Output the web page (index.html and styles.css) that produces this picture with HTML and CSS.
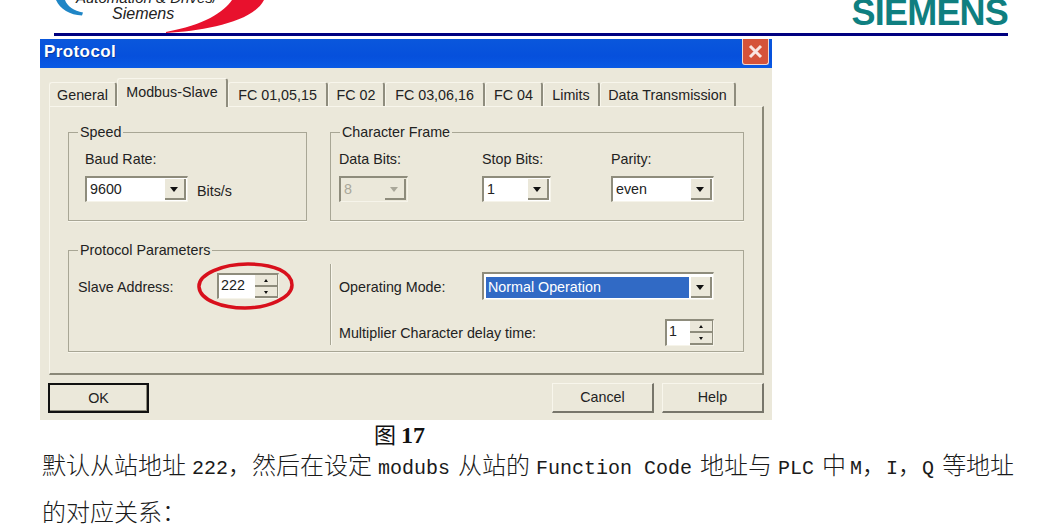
FILE: index.html
```html
<!DOCTYPE html>
<html lang="zh">
<head>
    <meta charset="UTF-8">
    <title>Protocol</title>
    <link rel="stylesheet" href="styles.css">
</head>
<body>
    <header class="page-head">
        <div class="logo">
            <svg class="logo-swoosh" width="211" height="33" viewBox="0 0 211 33">
                <path d="M2 0C6 9 16 15 28 15.500L29 12.500C20 11 13 6 11 0Z" fill="#1f86c6"/>
                <path d="M112 33C150 31 199 22 210 0L178 0C170 12 150 25 112 32Z" fill="#e8112d"/>
            </svg>
            <div class="logo-line">Automation &amp; Drives/</div>
            <div class="logo-line logo-name">Siemens</div>
        </div>
        <div class="brand">SIEMENS</div>
    </header>

    <div class="dialog">
        <div class="titlebar">
            <span class="title">Protocol</span>
            <span class="close">
                <svg width="17" height="17" viewBox="0 0 17 17"><path d="M3 3L14 14M14 3L3 14" stroke="#fff" stroke-width="3" stroke-opacity=".85"/></svg>
            </span>
        </div>
        <div class="dialog-body">
            <div class="tabs">
                <div class="tab">General</div>
                <div class="tab tab-active">Modbus-Slave</div>
                <div class="tab">FC 01,05,15</div>
                <div class="tab">FC 02</div>
                <div class="tab">FC 03,06,16</div>
                <div class="tab">FC 04</div>
                <div class="tab">Limits</div>
                <div class="tab">Data Transmission</div>
            </div>
            <div class="panel">
                <div class="group-row">
                    <fieldset class="group group-speed">
                        <legend>Speed</legend>
                        <div class="speed-body">
                            <div class="label">Baud Rate:</div>
                            <div class="inline">
                                <div class="combo combo-baud"><span class="value">9600</span><span class="drop"></span></div>
                                <span class="unit">Bits/s</span>
                            </div>
                        </div>
                    </fieldset>
                    <fieldset class="group group-frame">
                        <legend>Character Frame</legend>
                        <div class="frame-grid">
                            <div>
                                <div class="label">Data Bits:</div>
                                <div class="combo combo-small combo-off"><span class="value">8</span><span class="drop"></span></div>
                            </div>
                            <div>
                                <div class="label">Stop Bits:</div>
                                <div class="combo combo-small"><span class="value">1</span><span class="drop"></span></div>
                            </div>
                            <div>
                                <div class="label">Parity:</div>
                                <div class="combo combo-parity"><span class="value">even</span><span class="drop"></span></div>
                            </div>
                        </div>
                    </fieldset>
                </div>
                <fieldset class="group group-params">
                    <legend>Protocol Parameters</legend>
                    <div class="params">
                        <div class="params-left">
                            <span class="slave-label">Slave Address:</span>
                            <div class="spin spin-slave"><span class="value">222</span><span class="arrows"><i class="up"></i><i class="down"></i></span></div>
                            <svg class="circle" width="99" height="50" viewBox="0 0 99 50">
                                <path d="M3 26C2 13 27 3 52 3C78 3 96 11 96 24C96 37 72 47 49 47C26 47 4 39 3 26Z" fill="none" stroke="#d8101c" stroke-width="3.500"/>
                            </svg>
                        </div>
                        <div class="params-right">
                            <div class="mode-row">
                                <span class="mode-label">Operating Mode:</span>
                                <div class="combo combo-mode"><span class="value selected">Normal Operation</span><span class="drop"></span></div>
                            </div>
                            <div class="delay-row">
                                <span>Multiplier Character delay time:</span>
                                <div class="spin spin-delay"><span class="value">1</span><span class="arrows"><i class="up"></i><i class="down"></i></span></div>
                            </div>
                        </div>
                    </div>
                </fieldset>
            </div>
            <div class="footer">
                <div class="btn btn-default">OK</div>
                <div class="btn btn-cancel">Cancel</div>
                <div class="btn">Help</div>
            </div>
        </div>
    </div>

    <div class="caption">图 <b>17</b></div>
    <p class="doc-line doc-first"><span class="zh">默认从站地址</span><span class="lat lat-end">222</span><span class="zh">，然后在设定</span><span class="lat">modubs</span><span class="zh">从站的</span><span class="lat">Function Code</span><span class="zh">地址与</span><span class="lat">PLC</span><span class="zh">中</span><span class="lat lat-m">M</span><span class="zh">，</span><span>I</span><span class="zh">，</span><span class="lat-q">Q</span><span class="zh">等地址</span></p>
    <p class="doc-line"><span class="zh">的对应关系：</span></p>
</body>
</html>
```

FILE: styles.css
```css
/* Page */
body {
    margin: 0;
    background-color: #fff;
    font-family: "Liberation Sans", Arial, sans-serif;
    color: #222;
}

.page-head {
    display: flex;
    justify-content: space-between;
    height: 33px;
    margin: 0 51px 0 54px;
    border-bottom: 3px solid #000080;
    overflow: hidden;
}

.logo {
    position: relative;
    display: flex;
    flex-direction: column;
    justify-content: flex-end;
    width: 211px;
    height: 33px;
    padding-bottom: 11px;
    box-sizing: border-box;
}

.logo-swoosh {
    position: absolute;
    left: 0;
    top: 0;
}

.logo-line {
    position: relative;
    margin-left: 22px;
    font-size: 15px;
    font-style: italic;
    line-height: 16px;
    white-space: nowrap;
}

.logo-name {
    margin-left: 58px;
    font-size: 16px;
}

.brand {
    height: 33px;
    margin-top: -4px;
    font-size: 36px;
    font-weight: bold;
    line-height: 33px;
    letter-spacing: -0.8px;
    color: #0f7f80;
}

/* Dialog */
.dialog {
    width: 732px;
    margin: 3px 0 0 40px;
    background-color: #ebe8da;
}

.titlebar {
    display: flex;
    justify-content: space-between;
    align-items: flex-start;
    height: 29px;
    padding-right: 3px;
    background: linear-gradient(#0a57dc, #0650dc 60%, #0a5ae4);
}

.title {
    margin: 3px 0 0 4px;
    color: #fff;
    font-size: 17px;
    font-weight: bold;
    line-height: 20px;
    letter-spacing: 0.4px;
    text-shadow: 1px 1px 0 #0a3a9c;
}

.close {
    display: flex;
    align-items: center;
    justify-content: center;
    width: 25px;
    height: 25px;
    background-color: #d5533a;
    border: 1px solid #f0d8d0;
    border-top: 0;
    border-radius: 0 0 3px 3px;
}

.dialog-body {
    padding: 10px 8px 7px;
}

.tabs {
    display: grid;
    grid-template-columns: 68px 111px 100px 57px 100px 58px 57px 136px;
    align-items: end;
    height: 28px;
    margin-left: 1px;
    font-size: 14.300px;
}

.tab {
    position: relative;
    height: 24px;
    box-sizing: border-box;
    border-top: 1px solid #f8f6ec;
    border-left: 1px solid #f8f6ec;
    border-right: 2px solid #8f8d7e;
    border-radius: 3px 3px 0 0;
    line-height: 24px;
    text-align: center;
    white-space: nowrap;
}

.tab-active {
    height: 29px;
    margin-bottom: -1px;
    z-index: 1;
    background-color: #ebe8da;
    line-height: 26px;
}

.panel {
    height: 269px;
    margin-left: 1px;
    padding: 17px 0 0 18px;
    box-sizing: border-box;
    border-top: 1px solid #f8f6ec;
    border-left: 1px solid #f8f6ec;
    border-right: 2px solid #8a8878;
    border-bottom: 2px solid #8a8878;
    font-size: 14.300px;
}

.group-row {
    display: flex;
    gap: 23px;
}

.group {
    margin: 0;
    padding: 0;
    box-sizing: border-box;
    border: 1px solid #a8a695;
    box-shadow: 0 1px 0 #f8f6ec;
}

.group legend {
    margin-left: 9px;
    padding: 0 2px;
    line-height: 16px;
}

.group-speed {
    width: 239px;
    height: 97px;
    padding-top: 11px;
}

.speed-body {
    padding-left: 16px;
}

.group-frame {
    width: 414px;
    height: 97px;
    padding-top: 11px;
}

.frame-grid {
    display: grid;
    grid-template-columns: 143px 129px auto;
    padding-left: 8px;
}

.label {
    height: 16px;
    margin-bottom: 9px;
    line-height: 16px;
}

.inline {
    display: flex;
    align-items: center;
    gap: 9px;
}

.unit {
    margin-top: 3px;
}

/* Sunken controls */
.combo,
.spin {
    display: flex;
    box-sizing: border-box;
    background-color: #fff;
    border-top: 2px solid #8e8c7c;
    border-left: 2px solid #8e8c7c;
    border-right: 1px solid #f6f4ea;
    border-bottom: 1px solid #f6f4ea;
}

.combo {
    height: 26px;
    padding: 1px;
}

.combo-baud,
.combo-parity {
    width: 103px;
}

.combo-small {
    width: 69px;
}

.combo-off {
    background-color: #ebe8da;
    color: #a9a799;
}

.combo-mode {
    width: 232px;
    height: 28px;
    padding: 3px 1px 1px 2px;
}

.value {
    flex: 1;
    padding-left: 2px;
    line-height: 20px;
}

.selected {
    background-color: #316ac5;
    color: #fff;
    margin-right: 2px;
}

.drop {
    position: relative;
    width: 21px;
    box-sizing: border-box;
    background-color: #ebe8da;
    border-right: 2px solid #8e8c7c;
    border-bottom: 2px solid #8e8c7c;
}

.drop::after {
    content: "";
    position: absolute;
    left: 5px;
    top: 8px;
    border-style: solid;
    border-width: 5px 4.500px 0;
    border-color: #111 transparent transparent;
}

.combo-off .drop::after {
    border-top-color: #a9a799;
}

/* Lower group */
.group-params {
    width: 676px;
    height: 110px;
    margin-top: 21px;
    padding-top: 6px;
}

.params {
    display: flex;
    height: 81px;
}

.params-left {
    position: relative;
    display: flex;
    align-items: flex-start;
    width: 261px;
    padding: 9px 0 0 9px;
    box-sizing: border-box;
}

.slave-label {
    width: 139px;
    line-height: 28px;
}

.spin {
    height: 26px;
}

.spin-slave {
    width: 62px;
}

.spin-delay {
    width: 49px;
    height: 27px;
}

.circle {
    position: absolute;
    left: 127px;
    top: -3px;
}

.arrows {
    display: flex;
    flex-direction: column;
    justify-content: space-between;
    width: 22px;
    background-color: #ebe8da;
    border-right: 1px solid #8e8c7c;
}

.arrows i {
    position: relative;
    display: block;
    height: 10px;
    border-bottom: 2px solid #8e8c7c;
}

.up::after,
.down::after {
    content: "";
    position: absolute;
    left: 9px;
    top: 4px;
    border-style: solid;
    border-color: transparent;
    border-width: 0 2.500px 3px;
    border-bottom-color: #111;
}

.down::after {
    border-width: 3px 2.500px 0;
    border-top-color: #111;
}

.params-right {
    flex: 1;
    padding: 8px 0 0 8px;
    border-left: 1px solid #a8a695;
    box-shadow: inset 1px 0 0 #f8f6ec;
}

.mode-row {
    display: flex;
    align-items: center;
}

.mode-label {
    width: 143px;
    margin-top: 2px;
}

.delay-row {
    display: flex;
    justify-content: space-between;
    align-items: center;
    width: 375px;
    margin-top: 19px;
}

/* Buttons */
.footer {
    display: flex;
    gap: 8px;
    margin-top: 8px;
}

.btn {
    width: 102px;
    height: 30px;
    box-sizing: border-box;
    border-top: 1px solid #f8f6ec;
    border-left: 1px solid #f8f6ec;
    border-right: 2px solid #77756a;
    border-bottom: 2px solid #77756a;
    font-size: 14.300px;
    line-height: 27px;
    text-align: center;
}

.btn-default {
    width: 101px;
    border: 2px solid #111;
    box-shadow: inset -1px -1px 0 #8e8c7c;
}

.btn-cancel {
    margin-left: auto;
}

/* Document text */
.caption {
    margin: -2px 0 0 374px;
    font-family: "Noto Sans CJK SC", sans-serif;
    font-size: 22px;
    line-height: 30px;
    color: #111;
}

.caption b {
    font-family: "Liberation Serif", serif;
    font-size: 24px;
    font-weight: bold;
}

.doc-line {
    margin: 0 0 0 42px;
    height: 47px;
    line-height: 47px;
    font-family: "Liberation Mono", monospace;
    font-size: 20px;
    white-space: nowrap;
    color: #1a1a1a;
}

.doc-first {
    margin-top: -10px;
}

.zh {
    font-family: "Noto Sans CJK SC", sans-serif;
    font-size: 24px;
    font-weight: 300;
}

.lat {
    margin: 0 8px 0 6px;
}

.lat-end {
    margin-right: 0;
}

.lat-m {
    margin: 0 0 0 4px;
}

.lat-q {
    margin-right: 8px;
}
```
